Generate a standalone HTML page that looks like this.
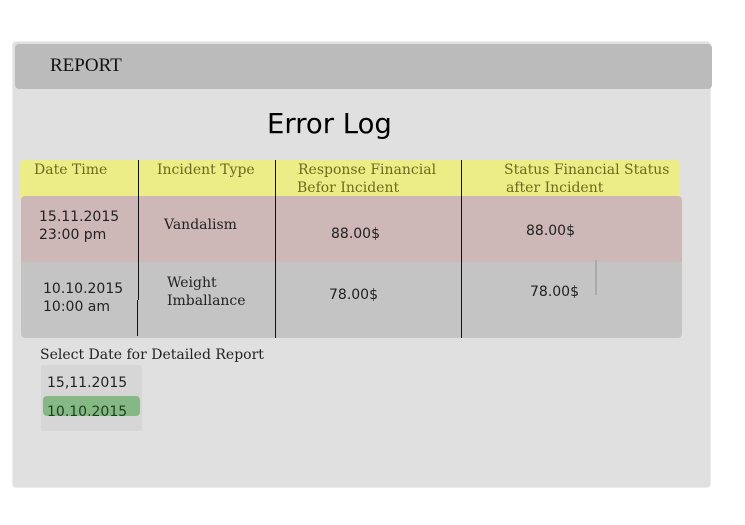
<!DOCTYPE html>
<html><head><style>
body{margin:0;width:745px;height:525px;background:#fff;position:relative;overflow:hidden;font-family:"DejaVu Serif","Liberation Serif",serif;}
div{position:absolute;box-sizing:border-box;}
.t{white-space:nowrap;color:#222;}
.h{color:#6d6a1e;font-size:14px;line-height:18px;}
.n{font-family:"DejaVu Sans","Liberation Sans",sans-serif;font-size:14px;line-height:18px;color:#222;}
.v{width:1px;background:#111;top:160px;height:178px;}
</style></head><body>
<div style="left:12px;top:41px;width:699px;height:447px;background:#e0e0e0;border:1px solid #ececec;border-radius:4px;"></div>
<div style="left:15px;top:44px;width:697px;height:45px;background:#bbbbbb;border-radius:4px;"></div>
<div class="t" style="left:50px;top:55px;font-family:'Liberation Serif',serif;font-size:19px;color:#111;">REPORT</div>
<div class="t" style="left:267px;top:108px;font-family:'DejaVu Sans',sans-serif;font-size:27.5px;color:#000;">Error Log</div>
<div style="left:20px;top:160px;width:660px;height:37px;background:#eded88;border-radius:4px 4px 0 0;"></div>
<div style="left:21px;top:196px;width:661px;height:66px;background:#cdb7b7;border-radius:4px 4px 0 0;"></div>
<div style="left:21px;top:262px;width:661px;height:76px;background:#c4c4c4;border-radius:0 0 4px 4px;"></div>
<div class="v" style="left:138px;height:140px;"></div>
<div class="v" style="left:137px;top:300px;height:36px;"></div>
<div class="v" style="left:275px;"></div>
<div class="v" style="left:461px;"></div>
<div style="left:595px;top:260px;width:2px;height:35px;background:#aaa;"></div>
<div class="t h" style="left:34px;top:161px;">Date Time</div>
<div class="t h" style="left:157px;top:161px;">Incident Type</div>
<div class="t h" style="left:298px;top:161px;">Response Financial<br><span style="margin-left:-1px">Befor Incident</span></div>
<div class="t h" style="left:504px;top:161px;">Status Financial Status<br><span style="margin-left:2px">after Incident</span></div>
<div class="t n" style="left:39px;top:208px;">15.11.2015<br>23:00 pm</div>
<div class="t" style="left:164px;top:217px;font-size:14px;">Vandalism</div>
<div class="t n" style="left:331px;top:225px;">88.00$</div>
<div class="t n" style="left:526px;top:222px;">88.00$</div>
<div class="t n" style="left:43px;top:280px;">10.10.2015<br>10:00 am</div>
<div class="t" style="left:167px;top:274px;font-size:14px;line-height:18px;">Weight<br>Imballance</div>
<div class="t n" style="left:329px;top:286px;">78.00$</div>
<div class="t n" style="left:530px;top:283px;">78.00$</div>
<div class="t" style="left:40px;top:347px;font-size:14px;">Select Date for Detailed Report</div>
<div style="left:41px;top:365px;width:101px;height:66px;background:#d6d6d6;border-radius:2px;"></div>
<div style="left:43px;top:396px;width:97px;height:20px;background:#86b886;border-radius:4px;"></div>
<div class="t n" style="left:47px;top:374px;">15,11.2015</div>
<div class="t n" style="left:47px;top:403px;color:#1f3f1f;">10.10.2015</div>
</body></html>
